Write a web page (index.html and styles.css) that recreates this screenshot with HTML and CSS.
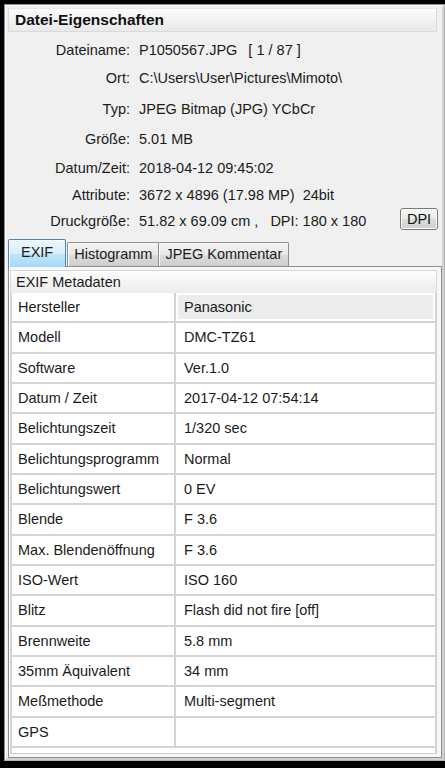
FILE: index.html
```html
<!DOCTYPE html>
<html lang="de">
<head>
<meta charset="utf-8">
<title>Datei-Eigenschaften</title>
<link rel="stylesheet" href="styles.css">
</head>
<body>
<div class="window">
  <div class="header">Datei-Eigenschaften</div>
  <div class="info">
    <div class="label">Dateiname:</div>
    <div class="value">P1050567.JPG<span class="count">[ 1 / 87 ]</span></div>
    <div class="label">Ort:</div>
    <div class="value">C:\Users\User\Pictures\Mimoto\</div>
    <div class="label">Typ:</div>
    <div class="value">JPEG Bitmap (JPG) YCbCr</div>
    <div class="label">Größe:</div>
    <div class="value">5.01 MB</div>
    <div class="label">Datum/Zeit:</div>
    <div class="value">2018-04-12 09:45:02</div>
    <div class="label">Attribute:</div>
    <div class="value">3672 x 4896 (17.98 MP)&nbsp; 24bit</div>
    <div class="label">Druckgröße:</div>
    <div class="value value-split"><span>51.82 x 69.09 cm ,&nbsp;&nbsp; DPI: 180 x 180</span><button class="btn">DPI</button></div>
  </div>
  <div class="tabs">
    <div class="tab active">EXIF</div>
    <div class="tab">Histogramm</div>
    <div class="tab">JPEG Kommentar</div>
  </div>
  <div class="frame">
    <div class="section-title">EXIF Metadaten</div>
    <div class="table-area">
      <div class="table">
        <div class="cell key">Hersteller</div><div class="cell val selected">Panasonic</div>
        <div class="cell key">Modell</div><div class="cell val">DMC-TZ61</div>
        <div class="cell key">Software</div><div class="cell val">Ver.1.0</div>
        <div class="cell key">Datum / Zeit</div><div class="cell val">2017-04-12 07:54:14</div>
        <div class="cell key">Belichtungszeit</div><div class="cell val">1/320 sec</div>
        <div class="cell key">Belichtungsprogramm</div><div class="cell val">Normal</div>
        <div class="cell key">Belichtungswert</div><div class="cell val">0 EV</div>
        <div class="cell key">Blende</div><div class="cell val">F 3.6</div>
        <div class="cell key">Max. Blendenöffnung</div><div class="cell val">F 3.6</div>
        <div class="cell key">ISO-Wert</div><div class="cell val">ISO 160</div>
        <div class="cell key">Blitz</div><div class="cell val">Flash did not fire [off]</div>
        <div class="cell key">Brennweite</div><div class="cell val">5.8 mm</div>
        <div class="cell key">35mm Äquivalent</div><div class="cell val">34 mm</div>
        <div class="cell key">Meßmethode</div><div class="cell val">Multi-segment</div>
        <div class="cell key">GPS</div><div class="cell val"></div>
      </div>
    </div>
  </div>
</div>
</body>
</html>
```
FILE: styles.css
```css
html, body {
  margin: 0;
  padding: 0;
  background: #000;
}
body {
  width: 445px;
  height: 768px;
  overflow: hidden;
  font-family: "Liberation Sans", Arial, sans-serif;
  font-size: 14.5px;
  color: #1b1b1b;
}
.window {
  margin: 4px 0 0 4px;
  width: 441px;
  height: 757px;
  box-sizing: border-box;
  background: #f0f0f0;
  border: 1px solid #8e8e8e;
  border-right-color: #b4b4b4;
  border-bottom-color: #b4b4b4;
  box-shadow: inset 1px 1px 0 #fbfbfb, inset -2px -2px 0 #d2d2d2;
  padding: 3px 2px 2px 3px;
  display: flex;
  flex-direction: column;
}
.header {
  height: 24px;
  margin-right: 5px;
  box-sizing: border-box;
  border: 1px solid #dadada;
  border-top-color: #e8e8e8;
  background: linear-gradient(#fbfbfb, #e9e9e9);
  font-weight: bold;
  font-size: 15.5px;
  line-height: 22px;
  padding-left: 6px;
  color: #111;
}
.info {
  margin-top: 4px;
  display: grid;
  grid-template-columns: 122px 1fr;
  grid-template-rows: 28px 28px 33px 28px 30px 23px 29px;
  column-gap: 9px;
  align-items: center;
}
.label {
  text-align: right;
  white-space: nowrap;
}
.value {
  white-space: nowrap;
}
.count {
  margin-left: 11px;
}
.value-split {
  display: flex;
  align-items: center;
  justify-content: space-between;
  padding-right: 4px;
}
.btn {
  width: 38px;
  height: 22px;
  margin-top: -4px;
  padding: 0;
  border: 1px solid #7a7a7a;
  border-radius: 3px;
  background: linear-gradient(#f7f7f7, #e9e9e9 50%, #dcdcdc 51%, #d2d2d2);
  box-shadow: inset 0 0 0 1px #fcfcfc;
  font-family: inherit;
  font-size: 14.5px;
  color: #111;
  line-height: 20px;
}
.tabs {
  height: 31px;
  display: flex;
  align-items: flex-end;
  position: relative;
  z-index: 1;
}
.tab {
  height: 24px;
  box-sizing: border-box;
  border: 1px solid #8c8e94;
  border-bottom: none;
  background: linear-gradient(#f3f3f3, #e8e8e8 50%, #dcdcdc 51%, #cfcfcf);
  box-shadow: inset 1px 1px 0 #fafafa;
  line-height: 22px;
  padding: 0 6px;
  margin-left: -1px;
  white-space: nowrap;
  color: #1b1b1b;
  border-radius: 2px 2px 0 0;
}
.tab.active {
  height: 28px;
  margin: 0 0 -1px 0;
  padding: 0 12px;
  line-height: 25px;
  border-color: #4a86b8;
  border-bottom: none;
  background: linear-gradient(#eaf6fd, #d9f0fc 50%, #bee6fd 51%, #a7d9f5);
  box-shadow: inset 1px 1px 0 #f4fbff;
}
.tab.active + .tab {
  margin-left: 1px;
}
.frame {
  flex: 1;
  border: 1px solid #8c8e94;
  background: #f7f7f7;
  padding: 3px 4px 3px 1px;
  box-shadow: inset 1px 0 0 #fff;
  display: flex;
  flex-direction: column;
  min-height: 0;
}
.section-title {
  height: 23px;
  box-sizing: border-box;
  border: 1px solid #d6d6d6;
  border-bottom: none;
  background: linear-gradient(#fdfdfd, #ececec);
  line-height: 22px;
  padding-left: 5px;
  color: #1b1b1b;
}
.table-area {
  flex: 1;
  background: #fff;
  border: 2px solid #d4d4d4;
  border-top: none;
  border-bottom: 1px solid #cfcfcf;
}
.table {
  display: grid;
  grid-template-columns: 164px 1fr;
  grid-auto-rows: 30.33px;
}
.cell {
  box-sizing: border-box;
  border-bottom: 2px solid #d4d4d4;
  line-height: 28px;
  white-space: nowrap;
  overflow: hidden;
}
.key {
  padding-left: 6px;
  border-right: 2px solid #d4d4d4;
}
.val {
  padding-left: 8px;
}
.selected {
  background: #ececec;
  box-shadow: inset 0 0 0 2px #fff;
}
```
